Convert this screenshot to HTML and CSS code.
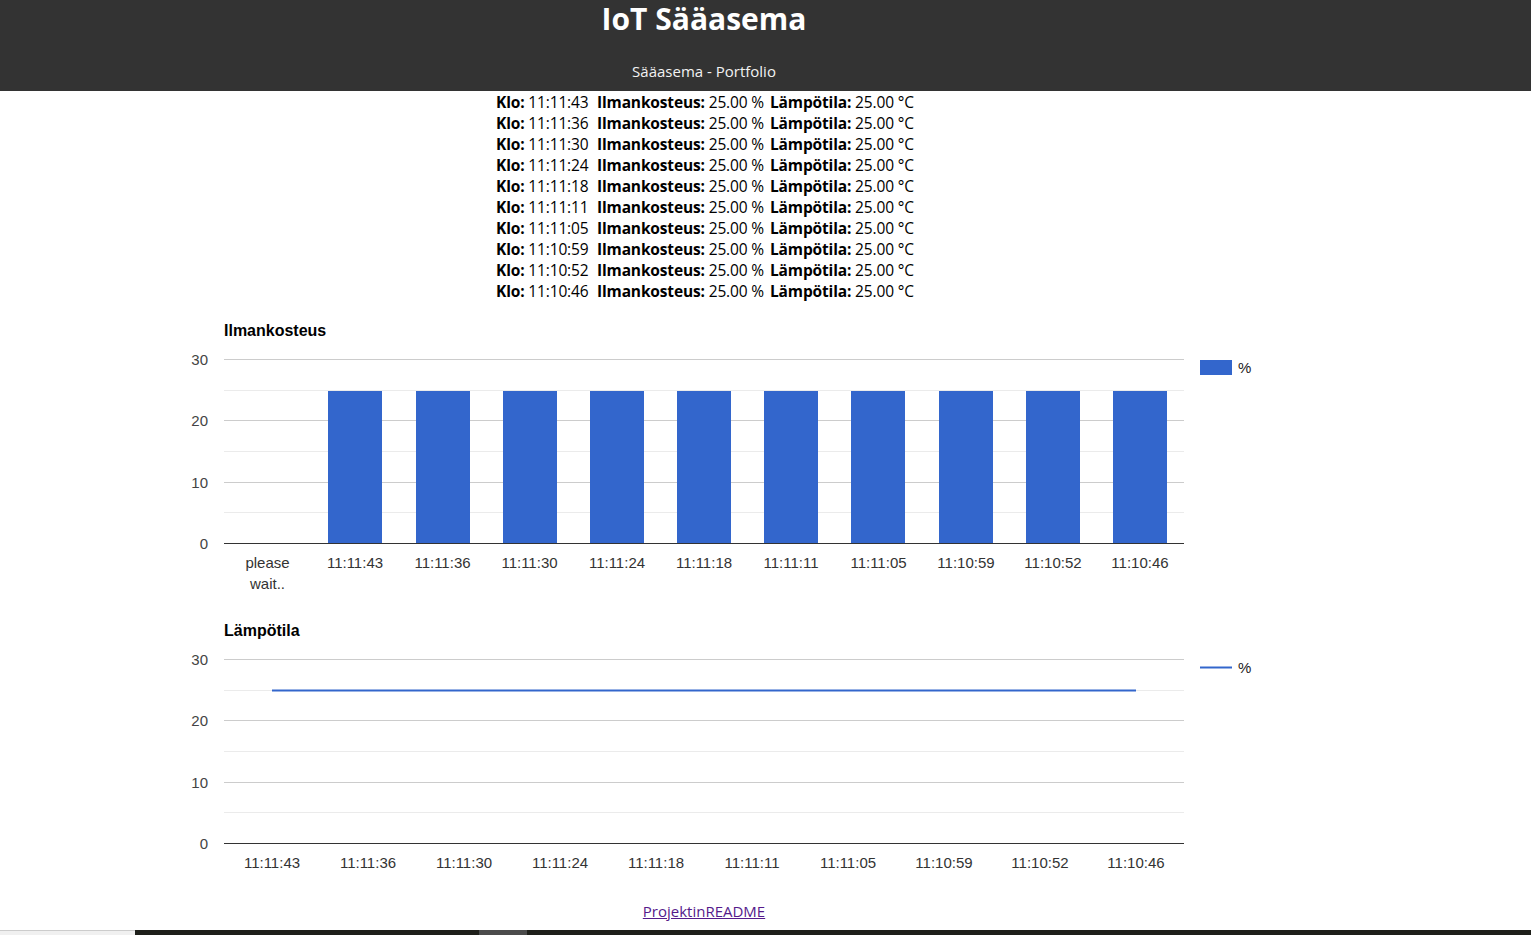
FILE: index.html
```html
<!DOCTYPE html>
<html lang="fi">
<head>
<meta charset="utf-8">
<title>IoT Sääasema</title>
<link rel="stylesheet" href="styles.css">
</head>
<body>
<header class="top">
  <div class="top-inner">
    <h1 class="title">IoT Sääasema</h1>
    <p class="subtitle">Sääasema - Portfolio</p>
  </div>
</header>
<main class="page">
  <div class="readings">
    <div class="row"><span class="item"><b>Klo:</b> 11:11:43</span><span class="item"><b>Ilmankosteus:</b> 25.00 %</span><span class="item"><b>Lämpötila:</b> 25.00 °C</span></div>
    <div class="row"><span class="item"><b>Klo:</b> 11:11:36</span><span class="item"><b>Ilmankosteus:</b> 25.00 %</span><span class="item"><b>Lämpötila:</b> 25.00 °C</span></div>
    <div class="row"><span class="item"><b>Klo:</b> 11:11:30</span><span class="item"><b>Ilmankosteus:</b> 25.00 %</span><span class="item"><b>Lämpötila:</b> 25.00 °C</span></div>
    <div class="row"><span class="item"><b>Klo:</b> 11:11:24</span><span class="item"><b>Ilmankosteus:</b> 25.00 %</span><span class="item"><b>Lämpötila:</b> 25.00 °C</span></div>
    <div class="row"><span class="item"><b>Klo:</b> 11:11:18</span><span class="item"><b>Ilmankosteus:</b> 25.00 %</span><span class="item"><b>Lämpötila:</b> 25.00 °C</span></div>
    <div class="row"><span class="item"><b>Klo:</b> 11:11:11</span><span class="item"><b>Ilmankosteus:</b> 25.00 %</span><span class="item"><b>Lämpötila:</b> 25.00 °C</span></div>
    <div class="row"><span class="item"><b>Klo:</b> 11:11:05</span><span class="item"><b>Ilmankosteus:</b> 25.00 %</span><span class="item"><b>Lämpötila:</b> 25.00 °C</span></div>
    <div class="row"><span class="item"><b>Klo:</b> 11:10:59</span><span class="item"><b>Ilmankosteus:</b> 25.00 %</span><span class="item"><b>Lämpötila:</b> 25.00 °C</span></div>
    <div class="row"><span class="item"><b>Klo:</b> 11:10:52</span><span class="item"><b>Ilmankosteus:</b> 25.00 %</span><span class="item"><b>Lämpötila:</b> 25.00 °C</span></div>
    <div class="row"><span class="item"><b>Klo:</b> 11:10:46</span><span class="item"><b>Ilmankosteus:</b> 25.00 %</span><span class="item"><b>Lämpötila:</b> 25.00 °C</span></div>
  </div>

  <svg class="chart" width="1300" height="300" viewBox="0 0 1300 300">
    <text class="c-title" x="224" y="35">Ilmankosteus</text>
    <g class="grid-minor">
      <line x1="224" x2="1184" y1="89.5" y2="89.5"/>
      <line x1="224" x2="1184" y1="150.5" y2="150.5"/>
      <line x1="224" x2="1184" y1="211.5" y2="211.5"/>
    </g>
    <g class="grid">
      <line x1="224" x2="1184" y1="58.5" y2="58.5"/>
      <line x1="224" x2="1184" y1="119.5" y2="119.5"/>
      <line x1="224" x2="1184" y1="181.5" y2="181.5"/>
    </g>
    <g class="bars">
      <rect x="328" y="90" width="54" height="152"/>
      <rect x="416" y="90" width="54" height="152"/>
      <rect x="503" y="90" width="54" height="152"/>
      <rect x="590" y="90" width="54" height="152"/>
      <rect x="677" y="90" width="54" height="152"/>
      <rect x="764" y="90" width="54" height="152"/>
      <rect x="851" y="90" width="54" height="152"/>
      <rect x="939" y="90" width="54" height="152"/>
      <rect x="1026" y="90" width="54" height="152"/>
      <rect x="1113" y="90" width="54" height="152"/>
    </g>
    <line class="axis" x1="224" x2="1184" y1="242.5" y2="242.5"/>
    <g class="v-labels">
      <text x="208" y="64">30</text>
      <text x="208" y="125">20</text>
      <text x="208" y="187">10</text>
      <text x="208" y="248">0</text>
    </g>
    <g class="h-labels">
      <text x="267.5" y="267">please</text>
      <text x="267.5" y="288">wait..</text>
      <text x="355" y="267">11:11:43</text>
      <text x="442.5" y="267">11:11:36</text>
      <text x="529.5" y="267">11:11:30</text>
      <text x="617" y="267">11:11:24</text>
      <text x="704" y="267">11:11:18</text>
      <text x="791" y="267">11:11:11</text>
      <text x="878.5" y="267">11:11:05</text>
      <text x="966" y="267">11:10:59</text>
      <text x="1053" y="267">11:10:52</text>
      <text x="1140" y="267">11:10:46</text>
    </g>
    <rect class="legend-box" x="1200" y="59" width="32" height="15"/>
    <text class="legend-text" x="1238" y="72">%</text>
  </svg>

  <svg class="chart" width="1300" height="300" viewBox="0 0 1300 300">
    <text class="c-title" x="224" y="35">Lämpötila</text>
    <g class="grid-minor">
      <line x1="224" x2="1184" y1="89.5" y2="89.5"/>
      <line x1="224" x2="1184" y1="150.5" y2="150.5"/>
      <line x1="224" x2="1184" y1="211.5" y2="211.5"/>
    </g>
    <g class="grid">
      <line x1="224" x2="1184" y1="58.5" y2="58.5"/>
      <line x1="224" x2="1184" y1="119.5" y2="119.5"/>
      <line x1="224" x2="1184" y1="181.5" y2="181.5"/>
    </g>
    <line class="series" x1="272" x2="1136" y1="89.5" y2="89.5"/>
    <line class="axis" x1="224" x2="1184" y1="242.5" y2="242.5"/>
    <g class="v-labels">
      <text x="208" y="64">30</text>
      <text x="208" y="125">20</text>
      <text x="208" y="187">10</text>
      <text x="208" y="248">0</text>
    </g>
    <g class="h-labels">
      <text x="272" y="267">11:11:43</text>
      <text x="368" y="267">11:11:36</text>
      <text x="464" y="267">11:11:30</text>
      <text x="560" y="267">11:11:24</text>
      <text x="656" y="267">11:11:18</text>
      <text x="752" y="267">11:11:11</text>
      <text x="848" y="267">11:11:05</text>
      <text x="944" y="267">11:10:59</text>
      <text x="1040" y="267">11:10:52</text>
      <text x="1136" y="267">11:10:46</text>
    </g>
    <line class="legend-line" x1="1200" x2="1232" y1="66.5" y2="66.5"/>
    <text class="legend-text" x="1238" y="72">%</text>
  </svg>

  <p class="foot"><a class="readme" href="#readme">ProjektinREADME</a></p>
</main>
<div class="taskbar">
  <span class="tb-left"></span>
  <span class="tb-mid"></span>
  <span class="tb-thumb"></span>
  <span class="tb-rest"></span>
</div>
</body>
</html>
```

FILE: styles.css
```css
html, body {
  margin: 0;
  padding: 0;
  background: #ffffff;
}

body {
  font-family: "Open Sans", "Noto Sans", sans-serif;
  color: #000;
}

.top {
  background: #333333;
  height: 91px;
}

.top-inner {
  width: 1408px;
  text-align: center;
  color: #ffffff;
}

.title {
  margin: 0;
  padding-top: 1px;
  font-size: 30px;
  line-height: 36px;
  font-weight: 700;
}

.subtitle {
  margin: 0;
  padding-top: 24px;
  font-size: 15px;
  line-height: 20px;
  color: #f2f2f2;
}

.page {
  width: 1408px;
}

.readings {
  display: flex;
  flex-direction: column;
  align-items: center;
  padding-top: 1px;
  height: 209px;
  font-size: 15.5px;
  line-height: 21px;
  letter-spacing: -0.15px;
}

.row {
  display: grid;
  grid-template-columns: 101px 173px 144px;
  width: 418px;
  padding-left: 2px;
}

.item {
  white-space: nowrap;
}

.item b {
  font-weight: 700;
}

.chart {
  display: block;
  font-family: "Liberation Sans", Arial, sans-serif;
}

.c-title {
  font-size: 16px;
  font-weight: 700;
  fill: #000;
}

.grid line {
  stroke: #cccccc;
  stroke-width: 1;
}

.grid-minor line {
  stroke: #ebebeb;
  stroke-width: 1;
}

.axis {
  stroke: #333333;
  stroke-width: 1;
}

.bars rect {
  fill: #3366cc;
}

.series {
  stroke: #3366cc;
  stroke-width: 2;
}

.v-labels text {
  font-size: 15px;
  fill: #444444;
  text-anchor: end;
}

.h-labels text {
  font-size: 15px;
  fill: #333333;
  text-anchor: middle;
}

.legend-box {
  fill: #3366cc;
}

.legend-line {
  stroke: #3366cc;
  stroke-width: 2;
}

.legend-text {
  font-size: 15px;
  fill: #222222;
}

.foot {
  margin: 0;
  text-align: center;
  font-size: 15px;
  line-height: 21px;
}

.readme {
  color: #551a8b;
}

.taskbar {
  position: fixed;
  left: 0;
  right: 0;
  bottom: 0;
  height: 5px;
  display: flex;
}

.tb-left {
  width: 135px;
  background: #f0f0f0;
  border-top: 1px solid #cccccc;
  box-sizing: border-box;
}

.tb-mid {
  width: 344px;
  background: #1e1f1a;
}

.tb-thumb {
  width: 48px;
  background: #4b4b4b;
}

.tb-rest {
  flex: 1;
  background: #1e1f1a;
}
```
